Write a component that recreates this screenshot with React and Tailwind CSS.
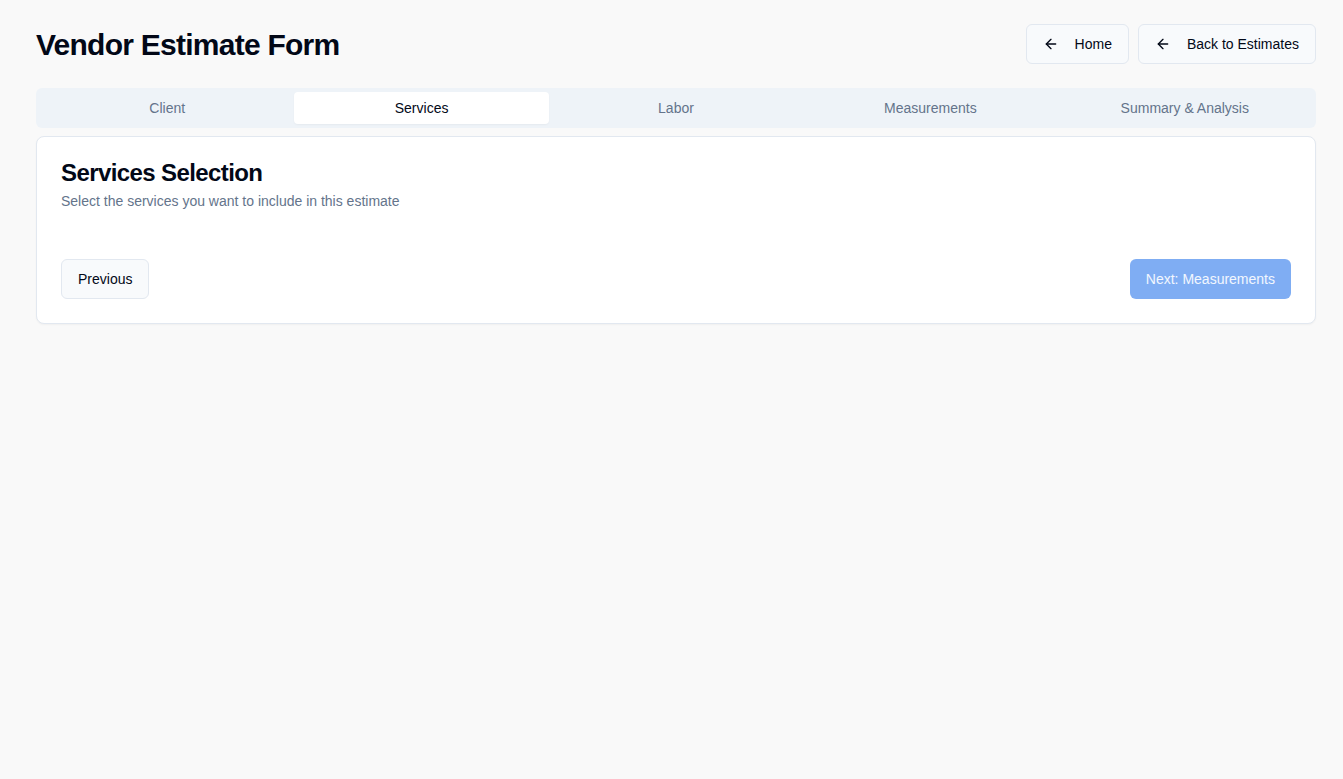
import { ArrowLeft } from "lucide-react";

const tabs = ["Client", "Services", "Labor", "Measurements", "Summary & Analysis"];

export default function App() {
  return (
    <div className="min-h-screen bg-[#f9f9f9] pl-9 pr-[27px] py-6 font-['Liberation_Sans',Arial,sans-serif] text-[#020817]">
      <header className="flex items-center justify-between h-10 mb-6">
        <h1 className="text-[30px] font-bold tracking-tight">Vendor Estimate Form</h1>
        <div className="flex gap-[9px]">
          <button className="flex items-center gap-4 h-10 px-4 rounded-md border border-[#e2e8f0] bg-[#f8fafc] text-sm">
            <ArrowLeft size={16} strokeWidth={2} />
            Home
          </button>
          <button className="flex items-center gap-4 h-10 px-4 rounded-md border border-[#e2e8f0] bg-[#f8fafc] text-sm">
            <ArrowLeft size={16} strokeWidth={2} />
            Back to Estimates
          </button>
        </div>
      </header>

      <div className="grid grid-cols-5 h-10 p-1 rounded-md bg-[#eef3f8]">
        {tabs.map((t) => (
          <div
            key={t}
            className={
              t === "Services"
                ? "flex items-center justify-center rounded-sm bg-white text-sm text-[#020817] shadow-[0_1px_2px_rgba(0,0,0,0.04)]"
                : "flex items-center justify-center text-sm text-[#64748b]"
            }
          >
            {t}
          </div>
        ))}
      </div>

      <div className="mt-2 rounded-lg border border-[#e2e8f0] bg-white p-6 shadow-[0_1px_2px_rgba(0,0,0,0.04)]">
        <h2 className="text-2xl font-bold leading-none tracking-tight">Services Selection</h2>
        <p className="mt-1.5 text-sm text-[#64748b]">Select the services you want to include in this estimate</p>
        <div className="mt-[48px] flex justify-between">
          <button className="h-10 px-4 rounded-md border border-[#e2e8f0] bg-[#f8fafc] text-sm">Previous</button>
          <button className="h-10 px-4 rounded-md bg-[#7fadf3] text-sm text-white/90">Next: Measurements</button>
        </div>
      </div>
    </div>
  );
}
